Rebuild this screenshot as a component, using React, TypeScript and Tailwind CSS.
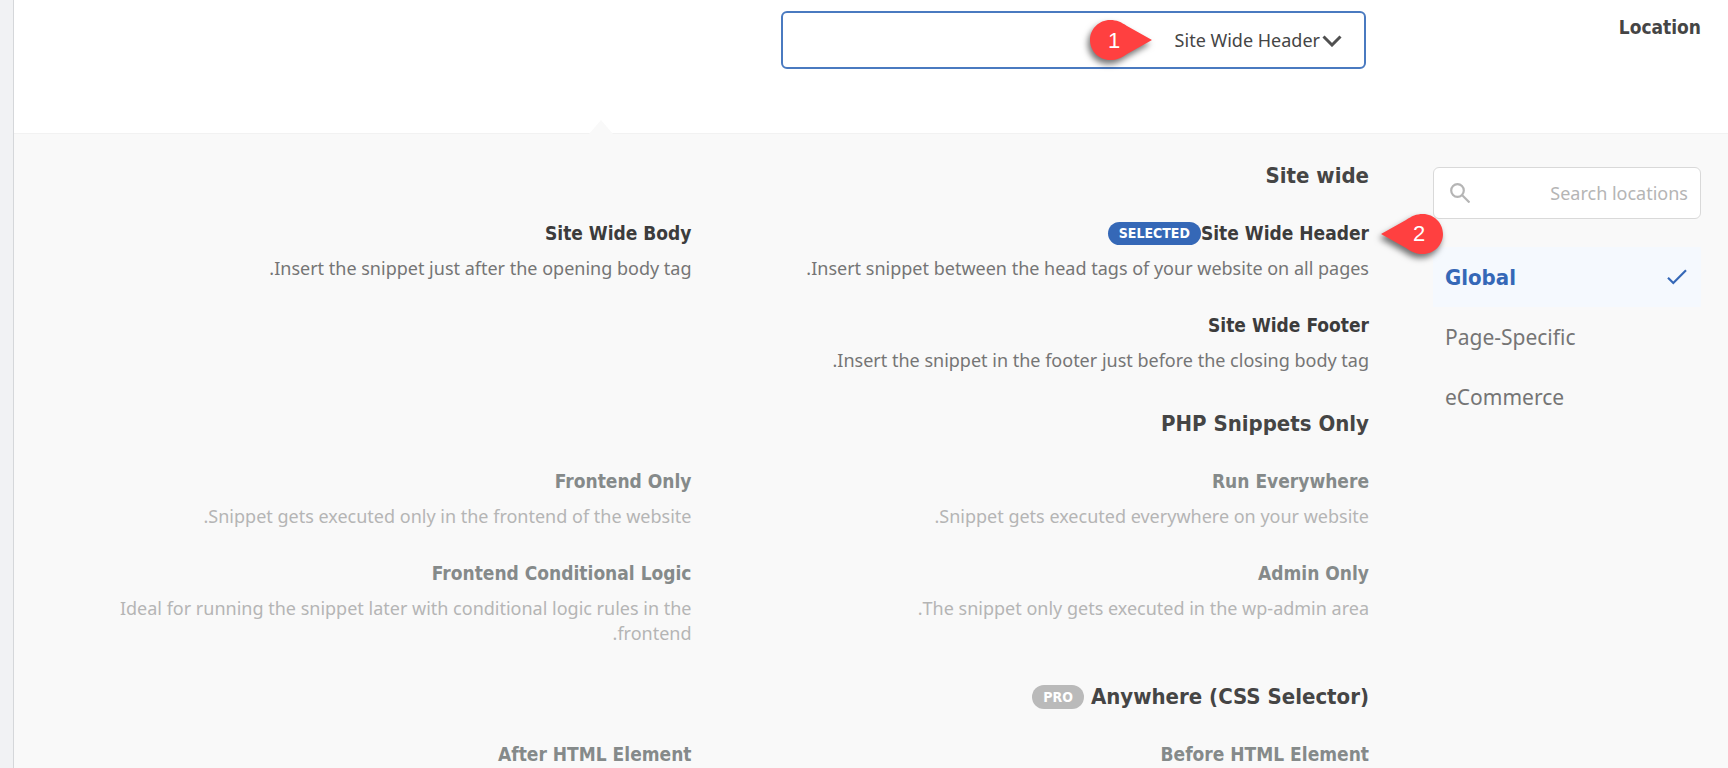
import React, { useState } from 'react';

interface LocationOption {
  id: string;
  title: string;
  description?: string;
}

interface LocationGroup {
  id: string;
  title: string;
  pro?: boolean;
  disabled?: boolean;
  options: LocationOption[];
}

const groups: LocationGroup[] = [
  {
    id: 'site-wide',
    title: 'Site wide',
    options: [
      { id: 'header', title: 'Site Wide Header', description: 'Insert snippet between the head tags of your website on all pages.' },
      { id: 'body', title: 'Site Wide Body', description: 'Insert the snippet just after the opening body tag.' },
      { id: 'footer', title: 'Site Wide Footer', description: 'Insert the snippet in the footer just before the closing body tag.' }
    ]
  },
  {
    id: 'php',
    title: 'PHP Snippets Only',
    disabled: true,
    options: [
      { id: 'everywhere', title: 'Run Everywhere', description: 'Snippet gets executed everywhere on your website.' },
      { id: 'frontend', title: 'Frontend Only', description: 'Snippet gets executed only in the frontend of the website.' },
      { id: 'admin', title: 'Admin Only', description: 'The snippet only gets executed in the wp-admin area.' },
      { id: 'conditional', title: 'Frontend Conditional Logic', description: 'Ideal for running the snippet later with conditional logic rules in the frontend.' }
    ]
  },
  {
    id: 'anywhere',
    title: 'Anywhere (CSS Selector)',
    pro: true,
    disabled: true,
    options: [
      { id: 'before', title: 'Before HTML Element' },
      { id: 'after', title: 'After HTML Element' }
    ]
  }
];

const categories = ['Global', 'Page-Specific', 'eCommerce'];

interface MarkerProps {
  label: string;
  pointing: 'left' | 'right';
}

const Marker: React.FC<MarkerProps> = ({ label, pointing }) => (
  <span className="relative flex w-[62px] h-10">
    <svg viewBox="0 0 62 40" className="w-full h-full overflow-visible drop-shadow-[-2px_4px_3px_rgba(0,0,0,0.55)]" aria-hidden="true">
      <path
        fill="#ff4040"
        d={
          pointing === 'right'
            ? 'M20 0C9 0 0 9 0 20s9 20 20 20c7 0 11-2 17-6L62 20 37 6C31 2 27 0 20 0Z'
            : 'M42 0c11 0 20 9 20 20s-9 20-20 20c-7 0-11-2-17-6L0 20 25 6c6-4 10-6 17-6Z'
        }
      />
    </svg>
    <span
      className={`absolute inset-y-0 w-10 flex items-center justify-center font-['Liberation_Sans',sans-serif] font-normal text-[22px] text-white ${
        pointing === 'right' ? 'left-1' : 'right-1'
      }`}
    >
      {label}
    </span>
  </span>
);

const App: React.FC = () => {
  const [selected, setSelected] = useState('header');
  const [category, setCategory] = useState('Global');

  return (
    <div dir="rtl" className="min-h-screen overflow-hidden flex bg-white font-['Noto_Sans',sans-serif] text-[18px] leading-[25px] text-[#454545]">
      <main className="flex-1 min-w-0 flex flex-col">
        <div className="flex pr-[27px] pt-[11px] pb-16">
          <label htmlFor="location" className="w-[335px] pt-1 font-['DejaVu_Sans_Condensed',sans-serif] text-[19px] font-bold">Location</label>
          <div className="relative w-[585px]">
            <select
              id="location"
              value={selected}
              onChange={(e) => setSelected(e.target.value)}
              className="block w-full h-[58px] pr-[44px] pl-4 appearance-none bg-white border-2 border-[#4a7ac0] rounded-md outline-none"
            >
              {groups.flatMap((group) => group.options).map((option) => (
                <option key={option.id} value={option.id}>{option.title}</option>
              ))}
            </select>
            <svg viewBox="0 0 20 12" className="absolute right-6 top-6 w-5 h-3 pointer-events-none" fill="none" stroke="#505050" strokeWidth="3" aria-hidden="true">
              <path d="M1.5 1.5 10 10l8.500-8.500" />
            </svg>
            <div className="absolute right-[214px] top-[9px] pointer-events-none">
              <Marker label="1" pointing="right" />
            </div>
          </div>
        </div>

        <div className="relative flex-1 flex gap-16 pr-[27px] pl-10 bg-[#f9f9f9] border-t border-[#f2f2f2]">
          <svg viewBox="0 0 24 14" className="absolute left-[575px] -top-[14px] w-6 h-[14px]" aria-hidden="true">
            <path d="M12 0 24 14H0Z" fill="#f9f9f9" />
          </svg>

          <aside className="w-[268px] shrink-0 pt-[33px]">
            <div className="relative mb-7">
              <input
                type="search"
                aria-label="Search locations"
                placeholder="Search locations"
                className="block w-full h-[52px] pr-3 pl-12 bg-white border border-[#d9d9d9] rounded-md outline-none placeholder:text-[#b5b5b5]"
              />
              <svg viewBox="0 0 20 20" className="absolute left-[17px] top-4 w-5 h-5" fill="none" stroke="#b5b5b5" strokeWidth="2.200" aria-hidden="true">
                <circle cx="7.500" cy="7.500" r="6.300" />
                <path d="m12 12 7.500 7.500" />
              </svg>
            </div>
            {categories.map((name) => (
              <button
                key={name}
                dir="ltr"
                onClick={() => setCategory(name)}
                className={`w-full h-[60px] pl-3 pr-[14px] flex items-center justify-between ${
                  category === name
                    ? "bg-[#f5f9fe] font-['DejaVu_Sans_Condensed',sans-serif] text-[22px] font-bold text-[#3568b7]"
                    : 'text-[21px] text-[#757575]'
                }`}
              >
                {name}
                {category === name && (
                  <svg viewBox="0 0 20 16" className="w-5 h-4" fill="none" stroke="#3568b7" strokeWidth="2.200" aria-hidden="true">
                    <path d="M1 8.800 6.300 14 19 1.300" />
                  </svg>
                )}
              </button>
            ))}
          </aside>

          <div className="flex-1 min-w-0 pt-[27px] flex flex-col gap-9">
            {groups.map((group) => (
              <section key={group.id}>
                <h2 className="flex items-center gap-[7px] mb-[30px] font-['DejaVu_Sans_Condensed',sans-serif] text-[22px] leading-[30px] font-bold">
                  <span dir="ltr">{group.title}</span>
                  {group.pro && (
                    <span className="h-6 px-[11px] flex items-center rounded-full bg-[#bababa] text-[14px] text-white">PRO</span>
                  )}
                </h2>
                <div className="grid grid-cols-2 gap-x-10 gap-y-8">
                  {group.options.map((option) => (
                    <button
                      key={option.id}
                      disabled={group.disabled}
                      onClick={() => setSelected(option.id)}
                      className="flex flex-col gap-[10px] text-right"
                    >
                      <span className={`relative flex items-center font-['DejaVu_Sans_Condensed',sans-serif] text-[19px] font-bold ${group.disabled ? 'text-[#858a8a]' : 'text-[#3c3c3c]'}`}>
                        {option.title}
                        {selected === option.id && (
                          <>
                            <span className="h-[23px] px-[11px] flex items-center rounded-full bg-[#3568b7] text-[14px] text-white">SELECTED</span>
                            <span className="absolute left-full top-1/2 -translate-y-1/2 ml-3">
                              <Marker label="2" pointing="left" />
                            </span>
                          </>
                        )}
                      </span>
                      {option.description && (
                        <span className={group.disabled ? 'text-[#b5b5b5]' : 'text-[#757575]'}>{option.description}</span>
                      )}
                    </button>
                  ))}
                </div>
              </section>
            ))}
          </div>
        </div>
      </main>
      <div className="w-[14px] shrink-0 bg-[#f1f2f4] border-r border-[#d5d7da]" />
    </div>
  );
};

export default App;
